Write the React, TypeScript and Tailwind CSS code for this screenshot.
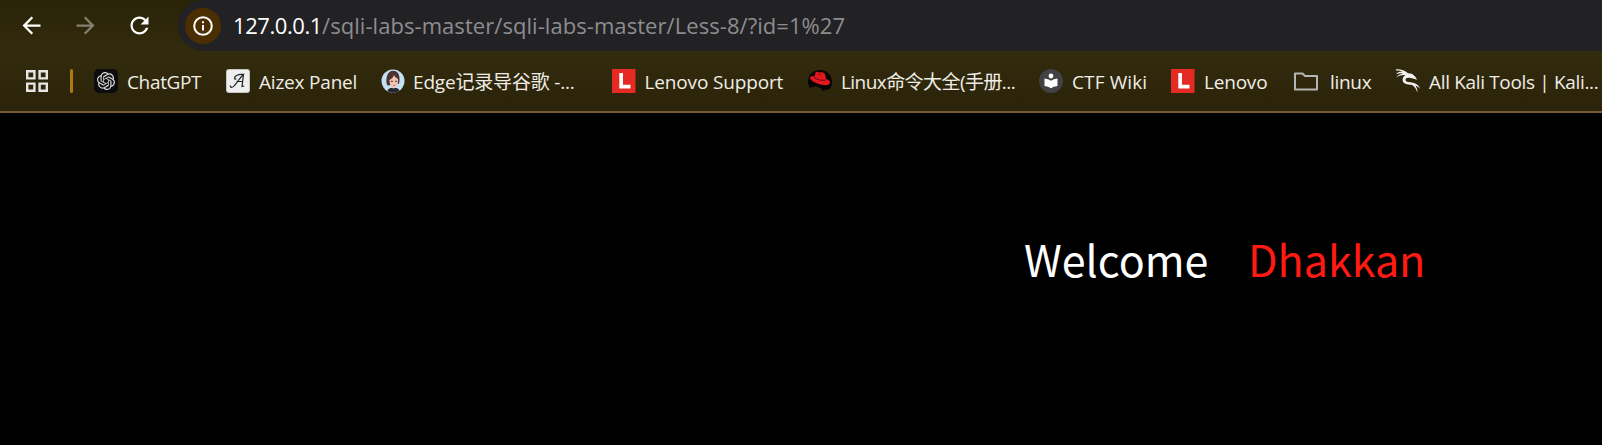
import React from "react";
import { SiOpenai } from "react-icons/si";

const segoe = "font-['Open_Sans','Noto_Sans_CJK_SC',sans-serif]";

function Nav({ d, className }: { d: string; className: string }) {
  return (
    <svg viewBox="0 0 24 24" className={`size-[27px] shrink-0 ${className}`} fill="currentColor">
      <path d={d} />
    </svg>
  );
}

function Bookmark({ width, gap, text, spacing, children }: { width: string; gap: string; text: string; spacing: string; children: React.ReactNode }) {
  return (
    <div className={`flex h-6 shrink-0 items-center ${width} ${gap}`}>
      {children}
      <span className={`whitespace-nowrap pt-[2px] text-[19px] leading-6 text-[#efede6] ${spacing}`}>{text}</span>
    </div>
  );
}

function LenovoIcon() {
  return (
    <svg viewBox="0 0 24 24" className="size-6 shrink-0">
      <rect x="0" width="23.5" height="24" fill="#e42a22" />
      <path d="M7.3 4h3.700v11.800h7.500v3.700H7.3z" fill="#fff" />
    </svg>
  );
}

export default function App() {
  return (
    <div className={`flex h-[445px] w-[1602px] flex-col overflow-hidden bg-black ${segoe}`}>
      <header className="flex h-[113px] shrink-0 flex-col border-b-2 border-[#755c36] bg-linear-to-b from-[#292308] via-[#332b0d] to-[#2b230a]">
        <div className="flex h-[51px] shrink-0 items-center pl-[18px]">
          <Nav className="text-white" d="M20 11H7.83l5.59-5.59L12 4l-8 8 8 8 1.41-1.41L7.83 13H20v-2z" />
          <Nav className="ml-[27px] text-[#857f70]" d="M12 4l-1.41 1.41L16.17 11H4v2h12.17l-5.58 5.59L12 20l8-8z" />
          <Nav className="ml-[27px] text-white" d="M17.65 6.35C16.2 4.9 14.21 4 12 4c-4.42 0-7.99 3.58-7.99 8s3.57 8 7.99 8c3.73 0 6.84-2.55 7.73-6h-2.08c-.82 2.33-3.04 4-5.65 4-3.31 0-6-2.69-6-6s2.69-6 6-6c1.66 0 3.14.69 4.22 1.78L13 11h7V4l-2.35 2.35z" />
          <div className="ml-[25px] flex h-[51px] flex-1 items-center rounded-l-full bg-[#222225] pl-[7px]">
            <div className="flex size-9 items-center justify-center rounded-full bg-[#4b2e02]">
              <svg viewBox="0 0 20 20" className="size-5" fill="none" stroke="#fff" strokeWidth="2">
                <circle cx="10" cy="10" r="8.8" />
                <path d="M10 9v5.500M10 5.200v2" />
              </svg>
            </div>
            <div className="mb-[2px] ml-[12px] flex whitespace-nowrap text-[22px] leading-7">
              <span className="w-[89px] tracking-[-0.42px] text-white">127.0.0.1</span>
              <span className="tracking-[0.06px] text-[#8d8d8f]">/sqli-labs-master/sqli-labs-master/Less-8/?id=1%27</span>
            </div>
          </div>
        </div>
        <div className="flex h-[60px] shrink-0 items-center pl-[26px]">
          <svg viewBox="0 0 22 22" className="size-[22px] shrink-0" fill="none" stroke="#e8e6e3" strokeWidth="2.4">
            <path d="M1.2 1.2h7.2v7.2H1.2zM13.6 1.2h7.2v7.2h-7.2zM1.2 13.6h7.2v7.2H1.2zM13.6 13.6h7.2v7.2h-7.2z" />
          </svg>
          <div className="ml-[22px] mr-[21px] h-6 w-[3px] shrink-0 rounded-full bg-[#b0790b]" />
          <Bookmark width="w-[132px]" gap="gap-[9px]" text="ChatGPT" spacing="tracking-[-0.35px]">
            <span className="flex size-6 shrink-0 items-center justify-center rounded-[5px] bg-[#0d0d0f]">
              <SiOpenai className="size-[18px] text-[#d8d8d8]" />
            </span>
          </Bookmark>
          <Bookmark width="w-[155px]" gap="gap-[9px]" text="Aizex Panel" spacing="tracking-[-0.2px]">
            <svg viewBox="0 0 24 24" className="size-6 shrink-0">
              <rect width="24" height="24" rx="3" fill="#b9b9b7" />
              <rect x=".8" y=".8" width="22.400" height="22.400" rx="2.500" fill="#efefef" />
              <path d="M4.500 16.500c-.8 2.300 2 2.500 4 0C12 12.500 14 8.500 17.500 5.500L16 17.500l2.200-.500M17.500 5.500C12 4.800 8.500 7 8.500 9.300c0 1 1.300 1 1.800.3M10.500 12.500h6.500" fill="none" stroke="#222" strokeWidth="1.200" />
            </svg>
          </Bookmark>
          <Bookmark width="w-[231px]" gap="gap-2" text="Edge记录导谷歌 -..." spacing="tracking-[-0.18px]">
            <svg viewBox="0 0 24 24" className="size-6 shrink-0">
              <circle cx="12" cy="12" r="11.500" fill="#c5e0f2" />
              <path d="M6.500 16.500C4.500 14 4.500 2 12 1.800c6 0 7.500 6 6 13z" fill="#4b3331" />
              <path d="M8.500 11c2-1 4-3 4.500-5 .7 2 2.500 3 4 4 .5 5-1.500 9-4.200 9.300C10 19 8.500 15 8.500 11z" fill="#eec5b5" />
              <path d="M10 12.300h1.800M14.300 12.300H16" stroke="#5c3c3a" strokeWidth="1.200" />
              <path d="M12.200 16.500h2" stroke="#c65f5f" strokeWidth=".9" />
              <path d="M6.500 22c1-3 3-3.500 6-2.500 3-1 5-.5 6 2.300a12 12 0 0 1-12 .2z" fill="#25252d" />
            </svg>
          </Bookmark>
          <Bookmark width="w-[196px]" gap="gap-[8.5px]" text="Lenovo Support" spacing="tracking-[-0.15px]">
            <LenovoIcon />
          </Bookmark>
          <Bookmark width="w-[231px]" gap="gap-[9px]" text="Linux命令大全(手册..." spacing="tracking-[-0.56px]">
            <svg viewBox="0 0 24 24" className="size-6 shrink-0">
              <path d="M12 1C5 1 0 6 0 12.500c0 3 1 5.500 2.500 7L4 17.500l1.500 1L7 17l6 2.500 2 3 1.500-2 1 1.500 2-2 2 .5C23.500 18 24 15.500 24 13 24 6 19 1 12 1z" fill="#080504" />
              <path d="M7.500 4c1-2 2.500-.8 4-.6C13.500 3 15 3 16.500 4.500c1 1.500 1.300 3.500 1.500 5.500 3 1 4.500 2.600 4 4-1 3-7 2.500-12 .7C5 13 1.500 10 2.200 8.200 2.800 7 5 7.200 6.500 7.500z" fill="#e3171d" />
              <path d="M6.500 8c.5 2.300 7 4 11 3" fill="none" stroke="#3a0a0c" strokeWidth=".8" />
              <path d="M10 4.800l4 1.200" stroke="#7d0f12" strokeWidth=".8" />
            </svg>
          </Bookmark>
          <Bookmark width="w-[132px]" gap="gap-[9px]" text="CTF Wiki" spacing="tracking-[0.12px]">
            <svg viewBox="0 0 24 24" className="size-6 shrink-0">
              <circle cx="12" cy="12" r="12" fill="#424245" />
              <circle cx="12" cy="7" r="2.400" fill="#fff" />
              <path d="M5.500 9.500q4 .3 6.500 2.300 2.500-2 6.500-2.300V17q-4 .3-6.500 2.300Q9.500 17.300 5.500 17z" fill="#fff" />
            </svg>
          </Bookmark>
          <Bookmark width="w-[123px]" gap="gap-[9px]" text="Lenovo" spacing="tracking-[-0.2px]">
            <LenovoIcon />
          </Bookmark>
          <Bookmark width="w-[102px]" gap="gap-3" text="linux" spacing="tracking-[-0.3px]">
            <svg viewBox="0 0 24 24" className="size-6 shrink-0" fill="none" stroke="#b4b5b6" strokeWidth="2" strokeLinejoin="round">
              <path d="M1 4.500h7.500L11 7h12v13.500H1z" />
            </svg>
          </Bookmark>
          <Bookmark width="w-[206px]" gap="gap-[9px]" text="All Kali Tools | Kali..." spacing="tracking-[-0.34px]">
            <svg viewBox="0 0 24 24" className="size-6 shrink-0" fill="#f4f4f2">
              <path d="M0 .3C5 .1 9 1.600 12 4.200c3-.2 5.500 1.300 7.200 3.800l2 2.800-4.200-1.300-3-.7C11.500 8.300 9.300 9 9.500 11c.3 2.100 3.300 2.100 6 2.500 4.200.6 7.500 2.700 8.500 6.200-2.200-2.500-4.700-3.500-8.500-3.900-4-.4-8.700-.8-8.900-4.800-.1-2 1-3.700 2.500-4.800C6.500 5.700 4 6.300.3 8.500 1.600 6.300 4.500 4.900 7 4.500 5 4 3 4 0 5c1.700-1.900 4.500-2.400 7-2C5 1.900 3 1.500 0 1.500z" />
              <path d="M16.500 14.500c3 1.200 5 4 5 9.500-1-3.500-2.500-6.500-6-8.500zM15 4.500l5.500 4.200-5-1.200z" />
            </svg>
          </Bookmark>
        </div>
      </header>
      <main className="flex items-baseline whitespace-pre pl-[1024px] pt-[110px] font-['Noto_Sans_CJK_SC',sans-serif] text-[43px] leading-[70px]">
        <span className="w-[224px] text-white">Welcome</span>
        <span className="text-[#ff1a12]">Dhakkan</span>
      </main>
    </div>
  );
}
